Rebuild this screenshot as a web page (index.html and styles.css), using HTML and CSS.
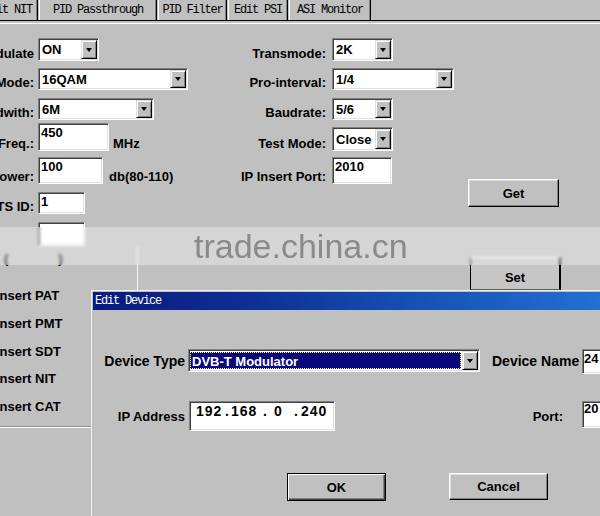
FILE: index.html
```html
<!DOCTYPE html>
<html>
<head>
<meta charset="utf-8">
<title>DVB-T Modulator</title>
<link rel="stylesheet" href="styles.css">
</head>
<body>
<nav class="tabs">
  <div class="tab tab-nit">Edit NIT</div>
  <div class="tab tab-pass">PID Passthrough</div>
  <div class="tab tab-filter">PID Filter</div>
  <div class="tab tab-psi">Edit PSI</div>
  <div class="tab tab-asi">ASI Monitor</div>
</nav>
<div class="panel-edge"></div>

<main class="form">
  <section class="col-left">
    <div class="row r1"><label class="lbl-l">Modulate</label><div class="combo c-mod"><span class="val">ON</span><span class="drop"></span></div></div>
    <div class="row r2"><label class="lbl-l">Mode:</label><div class="combo c-qam"><span class="val">16QAM</span><span class="drop"></span></div></div>
    <div class="row r3"><label class="lbl-l">Bandwith:</label><div class="combo c-bw"><span class="val">6M</span><span class="drop"></span></div></div>
    <div class="row r4l"><label class="lbl-l">Freq.:</label><div class="field i-freq">450</div><span class="unit">MHz</span></div>
    <div class="row r5"><label class="lbl-l">Power:</label><div class="field i-pow">100</div><span class="unit unit-db">db(80-110)</span></div>
    <div class="row r6"><label class="lbl-l">TS ID:</label><div class="field i-ts">1</div></div>
    <div class="row r7"><span class="lbl-l"></span><div class="field i-ts i-blank"></div></div>
  </section>
  <section class="col-right">
    <div class="row r1"><label class="lbl-r">Transmode:</label><div class="combo c-tm"><span class="val">2K</span><span class="drop"></span></div></div>
    <div class="row r2"><label class="lbl-r">Pro-interval:</label><div class="combo c-pi"><span class="val">1/4</span><span class="drop"></span></div></div>
    <div class="row r3"><label class="lbl-r">Baudrate:</label><div class="combo c-br"><span class="val">5/6</span><span class="drop"></span></div></div>
    <div class="row r4r"><label class="lbl-r">Test Mode:</label><div class="combo c-test"><span class="val">Close</span><span class="drop"></span></div></div>
    <div class="row r5"><label class="lbl-r">IP Insert Port:</label><div class="field i-port">2010</div></div>
    <button class="btn btn-get">Get</button>
  </section>
</main>

<div class="lower">
  <div class="checklist">
    <div class="paren"><span>(</span><span class="paren-r">)</span></div>
    <div class="checks">
      <div class="chk">Insert PAT</div>
      <div class="chk">Insert PMT</div>
      <div class="chk">Insert SDT</div>
      <div class="chk">Insert NIT</div>
      <div class="chk">Insert CAT</div>
    </div>
    <div class="sep"></div>
  </div>
  <div class="lower-right">
    <button class="btn-set">Set</button>
  </div>
</div>

<div class="watermark">trade.china.cn</div>

<div class="dialog">
  <div class="dlg-title">Edit Device</div>
  <div class="dlg-body">
    <div class="drow">
      <label class="dlbl dlbl-lg">Device Type</label>
      <div class="combo dtype"><span class="sel">DVB-T Modulator</span><span class="drop"></span></div>
      <label class="dname-lbl">Device Name</label>
      <div class="field dname">24</div>
    </div>
    <div class="drow drow2">
      <label class="dlbl dlbl-ip">IP Address</label>
      <div class="field ip"><span class="oct oct1">192</span><span class="dot dot1">.</span><span class="oct oct2">168</span><span class="dot dot2">.</span><span class="oct oct3">0</span><span class="dot dot3">.</span><span class="oct">240</span></div>
      <label class="dport-lbl">Port:</label>
      <div class="field dport">20</div>
    </div>
    <div class="dbtns">
      <button class="btn btn-ok">OK</button>
      <button class="btn btn-cancel">Cancel</button>
    </div>
  </div>
</div>
</body>
</html>
```

FILE: styles.css
```css
html, body {
  margin: 0;
  padding: 0;
  background: #c0c0c0;
}
body {
  width: 600px;
  height: 516px;
  overflow: hidden;
  position: relative;
  font-family: "Liberation Sans", Arial, sans-serif;
  font-size: 13px;
  font-weight: bold;
  color: #000;
}
button {
  font: inherit;
  color: inherit;
  margin: 0;
  padding: 0;
  display: flex;
  align-items: center;
  justify-content: center;
  box-sizing: border-box;
  background: #c0c0c0;
}

/* tabs */
.tabs {
  display: flex;
  height: 20px;
  border-bottom: 1px solid #000;
}
.tab {
  box-sizing: border-box;
  height: 20px;
  flex: none;
  margin-left: 1px;
  border-left: 1px solid #fff;
  border-right: 1px solid #000;
  box-shadow: inset -1px 0 #808080;
  font-family: "Liberation Mono", "DejaVu Sans Mono", monospace;
  font-weight: normal;
  font-size: 12px;
  letter-spacing: -1.2px;
  line-height: 20px;
  text-align: center;
  white-space: nowrap;
  color: #000;
}
.tab-nit { width: 60px; margin-left: -22px; }
.tab-pass { width: 118px; }
.tab-filter { width: 69px; }
.tab-psi { width: 60px; }
.tab-asi { width: 82px; }
.panel-edge {
  height: 1px;
  margin-top: 2px;
  background: #fff;
}

/* form */
.form { display: flex; }
.col-left { width: 238px; flex: none; }
.col-right { flex: 1; }
.row {
  display: flex;
  align-items: flex-end;
}
.r1 { margin-top: 14px; }
.r2 { margin-top: 7px; }
.r3 { margin-top: 8px; }
.r4l { margin-top: 3px; }
.r4r { margin-top: 7px; }
.r5 { margin-top: 6px; }
.r6 { margin-top: 8px; }
.r7 { margin-top: 8px; }

.lbl-l, .lbl-r {
  display: flex;
  justify-content: flex-end;
  flex: none;
  white-space: nowrap;
  line-height: 14px;
}
.lbl-l { width: 34px; margin-right: 4px; }
.lbl-r { width: 88px; margin-right: 6px; }
.unit { line-height: 14px; margin-left: 4px; white-space: nowrap; }
.unit-db { margin-left: 6px; }

.combo, .field {
  box-sizing: border-box;
  background: #fff;
  border: 1px solid;
  border-color: #808080 #fff #fff #808080;
  box-shadow: inset 1px 1px #404040, inset -1px -1px #dfdfdf;
  padding: 1px;
  flex: none;
  white-space: nowrap;
  overflow: hidden;
}
.combo { display: flex; }
.val {
  flex: 1;
  align-self: center;
  padding-left: 2px;
  overflow: hidden;
}
.drop {
  width: 16px;
  flex: none;
  box-sizing: border-box;
  background: #c0c0c0;
  border: 1px solid;
  border-color: #dfdfdf #000 #000 #dfdfdf;
  box-shadow: inset 1px 1px #fff, inset -1px -1px #808080;
  display: flex;
  align-items: center;
  justify-content: center;
}
.drop::after {
  content: "";
  border-left: 3.5px solid transparent;
  border-right: 3.5px solid transparent;
  border-top: 4px solid #000;
}
.c-mod { width: 61px; height: 23px; }
.c-qam { width: 150px; height: 22px; }
.c-bw { width: 116px; height: 22px; }
.c-tm { width: 61px; height: 23px; }
.c-pi { width: 122px; height: 22px; }
.c-br { width: 61px; height: 22px; }
.c-test { width: 61px; height: 24px; }

.field {
  padding: 1px 1px 0 2px;
  line-height: 16px;
}
.i-freq { width: 71px; height: 28px; }
.i-pow { width: 65px; height: 27px; }
.i-ts { width: 47px; height: 22px; }
.i-blank { height: 24px; }
.i-port { width: 60px; height: 27px; }

.btn {
  background: #c0c0c0;
  border: 1px solid;
  border-color: #fff #000 #000 #fff;
  box-shadow: inset -1px -1px #808080, inset 1px 1px #dfdfdf;
}
.btn-get {
  width: 91px;
  height: 28px;
  margin-left: 230px;
  margin-top: -5px;
}

/* lower area behind dialog */
.lower { display: flex; }
.checklist {
  width: 137px;
  height: 271px;
  flex: none;
  border-right: 1px solid #f4f4f4;
}
.paren {
  display: flex;
  height: 26px;
  line-height: 26px;
  padding-left: 4px;
}
.paren-r { margin-left: 50px; }
.checks { margin-top: 10px; }
.chk {
  height: 27.75px;
  line-height: 27.75px;
  margin-left: -4px;
  white-space: nowrap;
}
.sep {
  margin-top: 5px;
  border-top: 1px solid #909090;
  border-bottom: 1px solid #fff;
}
.lower-right { flex: 1; }
.btn-set {
  width: 91px;
  height: 33px;
  margin-left: 332px;
  margin-top: 11px;
  padding-top: 7px;
  background: #c6c6c6;
  border-top: 1px solid #fff;
  border-left: 1px solid #000;
  border-right: 2px solid #000;
  border-bottom: 1px solid #5a5a5a;
}

/* watermark overlay */
.watermark {
  position: absolute;
  left: 0;
  top: 227px;
  width: 600px;
  height: 38px;
  box-sizing: border-box;
  padding-left: 194px;
  background: rgba(255, 255, 255, 0.33);
  backdrop-filter: blur(1.5px);
  font-family: "Liberation Sans", Arial, sans-serif;
  font-weight: normal;
  font-size: 34px;
  line-height: 38px;
  color: #8a8a8a;
  white-space: nowrap;
}

/* dialog window */
.dialog {
  position: absolute;
  left: 91px;
  top: 290px;
  width: 530px;
  height: 240px;
  padding: 1px;
  background: #c0c0c0;
  border-top: 1px solid #f2f2f2;
  border-left: 1px solid #f2f2f2;
}
.dlg-title {
  height: 18px;
  line-height: 18px;
  padding-left: 2px;
  background: linear-gradient(90deg, #0a1a7e 0%, #0d2f96 30%, #1550b4 60%, #2474d4 100%);
  color: #fff;
  font-family: "Liberation Mono", "DejaVu Sans Mono", monospace;
  font-weight: normal;
  font-size: 12px;
  letter-spacing: -1.2px;
  white-space: nowrap;
}
.dlg-body { padding-top: 39px; }
.drow {
  display: flex;
  align-items: flex-start;
}
.drow2 { margin-top: 27px; }
.dlbl {
  width: 92px;
  flex: none;
  text-align: right;
  white-space: nowrap;
}
.dlbl-lg { font-size: 14px; line-height: 24px; }
.dlbl-ip { line-height: 32px; }
.dtype {
  width: 292px;
  height: 23px;
  margin-left: 3px;
}
.sel {
  flex: 1;
  margin: 1px 1px 1px 0;
  padding-left: 2px;
  background: #08087a;
  color: #fff;
  outline: 1px dotted #ffffa0;
  outline-offset: -1px;
  line-height: 19px;
  white-space: nowrap;
  overflow: hidden;
}
.dname-lbl {
  width: 86px;
  flex: none;
  margin-left: 12px;
  font-size: 14px;
  line-height: 24px;
  white-space: nowrap;
}
.dname {
  width: 40px;
  height: 25px;
  margin-left: 4px;
  padding: 1px 0 0 1px;
}
.ip {
  width: 146px;
  height: 30px;
  margin-left: 4px;
  display: flex;
  padding: 1px 0 0 6px;
  font-size: 14px;
  letter-spacing: 1px;
}
.oct, .dot { flex: none; text-align: left; }
.oct1 { width: 29px; }
.dot1 { width: 6px; }
.oct2 { width: 32px; }
.dot2 { width: 11px; }
.oct3 { width: 20px; }
.dot3 { width: 7px; }
.dport-lbl {
  width: 228px;
  flex: none;
  margin-right: 19px;
  text-align: right;
  line-height: 32px;
}
.dport {
  width: 40px;
  height: 27px;
  padding: 0 0 0 1px;
  line-height: 13px;
}
.dbtns {
  display: flex;
  margin-top: 40px;
  padding-left: 194px;
}
.btn-ok {
  width: 99px;
  height: 28px;
  border-color: #000;
  box-shadow: inset 1px 1px #fff, inset -1px -1px #404040, inset -2px -2px #808080;
}
.btn-cancel {
  width: 99px;
  height: 27px;
  margin-left: 63px;
}
```
